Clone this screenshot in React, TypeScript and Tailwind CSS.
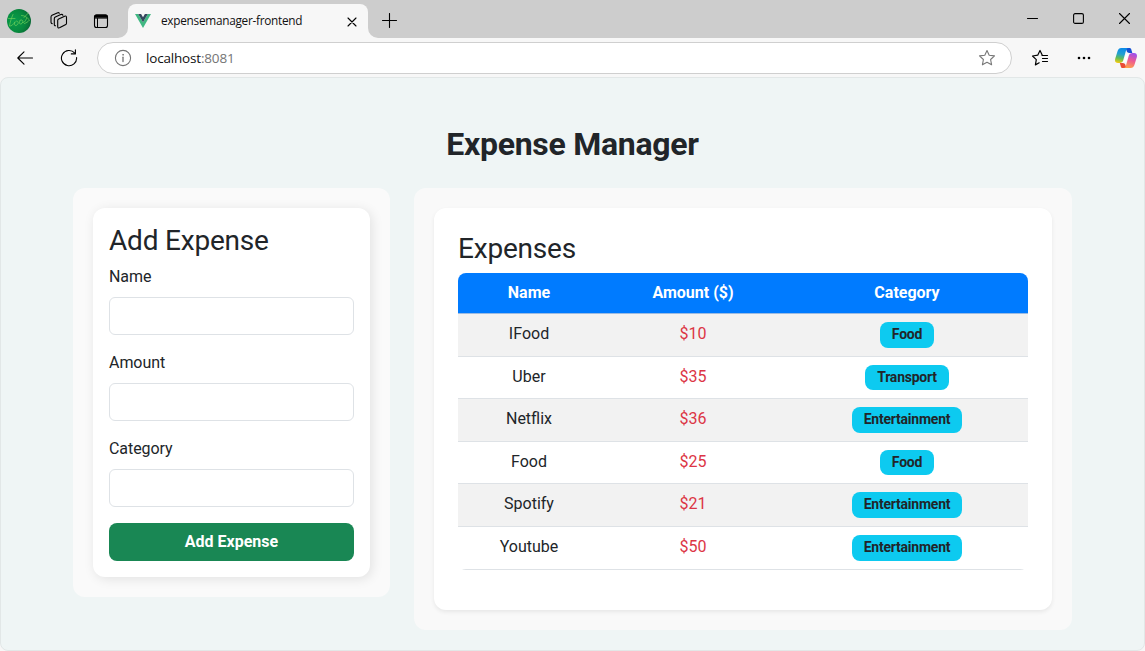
import type { ReactNode } from "react";

const expenses = [
  { name: "IFood", amount: 10, category: "Food" },
  { name: "Uber", amount: 35, category: "Transport" },
  { name: "Netflix", amount: 36, category: "Entertainment" },
  { name: "Food", amount: 25, category: "Food" },
  { name: "Spotify", amount: 21, category: "Entertainment" },
  { name: "Youtube", amount: 50, category: "Entertainment" },
];

function Line({ w, h, children, className = "" }: { w: number; h: number; children: ReactNode; className?: string }) {
  return (
    <svg
      width={w}
      height={h}
      viewBox={`0 0 ${w} ${h}`}
      fill="none"
      stroke="currentColor"
      strokeWidth="1.1"
      strokeLinecap="round"
      strokeLinejoin="round"
      className={`shrink-0 ${className}`}
    >
      {children}
    </svg>
  );
}

function Avatar() {
  return (
    <svg width="24" height="24" viewBox="0 0 24 24" className="mt-[3px] ml-[7px] shrink-0">
      <defs>
        <radialGradient id="av" cx="0.3" cy="0.5" r="0.75">
          <stop offset="0" stopColor="#0a9d4c" />
          <stop offset="0.6" stopColor="#078a3e" />
          <stop offset="1" stopColor="#0a6233" />
        </radialGradient>
      </defs>
      <circle cx="12" cy="12" r="12" fill="url(#av)" />
      <path
        d="M1.500 9.500H8M6 5.500C4.500 9 3 13 2.500 17 4.500 17.500 6.500 15 8 13M8 13C6.500 15.500 8 17.500 10 16S11.500 12 9.500 12M13 11.500C12 13.500 12.500 15.500 14 15S16.500 12.500 15.500 11.500 13.500 11 13 11.500M15.500 13.500C17.500 14 18.500 11.500 19.500 9.500M14.500 6.500C18 6.500 20 8.500 22.500 11 21 13 19 14 17.500 14.500M21.500 3.800 17 8.500"
        fill="none"
        stroke="#6fcf5a"
        strokeWidth="0.7"
        strokeLinecap="round"
      />
    </svg>
  );
}

function Copilot() {
  return (
    <svg width="22" height="20" viewBox="0 0 22 20" className="shrink-0">
      <defs>
        <linearGradient id="cpa" x1="0.5" y1="0" x2="0.3" y2="1">
          <stop offset="0" stopColor="#0c8be8" />
          <stop offset="0.4" stopColor="#22a0d0" />
          <stop offset="0.7" stopColor="#62bd54" />
          <stop offset="1" stopColor="#f4cb12" />
        </linearGradient>
        <linearGradient id="cpb" x1="0.7" y1="0" x2="0.4" y2="1">
          <stop offset="0" stopColor="#9a50ef" />
          <stop offset="0.5" stopColor="#ee5a91" />
          <stop offset="1" stopColor="#ffa04c" />
        </linearGradient>
      </defs>
      <path d="M10.500 0h3.900c1 0 1.600.5 1.900 1.500L17.300 5H14.500c-2 0-2.600-1-3-2.500z" fill="#1450d2" />
      <path d="M11.500 20H7.700c-1 0-1.600-.5-1.900-1.500L4.800 15h2.800c2 0 2.700 1 3 2.500z" fill="#ea4c34" />
      <path d="M6.200 0H13.500C12 0 11.500 1 11.100 2.300L8.300 12C7.600 14.200 6.500 15 4.800 15H3C.4 15-.4 13.200.2 10.800L2.600 3C3.300.9 4.400 0 6.200 0z" fill="url(#cpa)" />
      <path d="M15.800 20H8.500C10 20 10.500 19 10.900 17.700L13.700 8C14.400 5.800 15.500 5 17.200 5H19c2.600 0 3.400 1.800 2.800 4.200L19.400 17C18.700 19.100 17.600 20 15.800 20z" fill="url(#cpb)" />
      <path d="M11.500 6.200H14.100C13.500 6.600 13.200 7.300 12.900 8.200L11.600 12.600C11.300 13.500 10.900 13.900 10 13.900H7.900C8.500 13.500 8.900 12.800 9.200 11.900L10.300 8C10.600 6.900 10.900 6.300 11.500 6.200Z" fill="#fff" />
    </svg>
  );
}

function TitleBar() {
  return (
    <div className="flex h-[38px] items-center bg-[#cdcdcd]">
      <Avatar />
      <Line w={18} h={18} className="mt-[3px] ml-[19px]">
        <path d="M8.700 6.900 14.600 4.200Q16.500 3.500 16.500 5.300V11.200Q16.500 12 15.800 12.400L10 15.600Q7.700 16.700 7.700 14.600V8.500Q7.700 7.400 8.700 6.900Z" />
        <path d="M5.500 13.700Q4.300 13.800 4.300 12.200V6.800Q4.300 5.600 5.300 5.100L10.800 2.600Q12.400 2 12.900 3.200" />
        <path d="M2.200 11.600Q1 11.600 1 10V5Q1 3.700 2 3.200L7.200.9Q8.800.3 9.300 1.300" />
      </Line>
      <Line w={16} h={15} className="mt-[4px] ml-[25px]">
        <rect x="1.500" y="1" width="13" height="12.500" rx="2" strokeWidth="1.100" />
        <path d="M1.500 3.700V2.700Q1.500 1 3.200 1H12.800Q14.500 1 14.500 2.700V3.700Z" fill="currentColor" strokeWidth="1" />
        <path d="M4.500 4.500V13" strokeWidth="1" />
      </Line>
      <div className="flex h-[38px] w-[260px] items-end pl-[9px]">
        <svg width="10" height="10" viewBox="0 0 10 10" className="shrink-0">
          <path d="M10 0V10H0A10 10 0 0 0 10 0Z" fill="#f7f7f7" />
        </svg>
        <div className="flex h-[34px] w-[240px] shrink-0 items-center rounded-t-[8px] bg-[#f7f7f7] pr-[11px] pl-[7px]">
          <svg width="16" height="14" viewBox="0 0 16 14" className="shrink-0">
            <path d="M0 0H3.200L8 8.300 12.800 0H16L8 14Z" fill="#41b883" />
            <path d="M3.200 0H6.100L8 3.300 9.900 0H12.800L8 8.300Z" fill="#34495e" />
          </svg>
          <span className="ml-[10px] flex-1 text-[11.800px] tracking-[-0.270px] whitespace-nowrap text-[#111]">
            expensemanager-frontend
          </span>
          <Line w={10} h={10} className="mt-[1px]">
            <path d="M1 1 9 9M9 1 1 9" />
          </Line>
        </div>
        <svg width="10" height="10" viewBox="0 0 10 10" className="shrink-0">
          <path d="M0 0V10H10A10 10 0 0 1 0 0Z" fill="#f7f7f7" />
        </svg>
      </div>
      <Line w={15} h={15} className="mt-[3px] ml-[13px]">
        <path d="M7.500.5V14.500M.5 7.500H14.500" />
      </Line>
      <div className="mr-[15px] mb-[2px] ml-auto flex items-center gap-[35px]">
        <Line w={11} h={11}>
          <path d="M.5 5.500H10.500" />
        </Line>
        <Line w={11} h={11}>
          <rect x=".6" y=".6" width="9.800" height="9.800" rx="1.500" />
        </Line>
        <Line w={11} h={11}>
          <path d="M.5.5 10.500 10.500M10.500.5.5 10.500" />
        </Line>
      </div>
    </div>
  );
}

function Toolbar() {
  return (
    <div className="flex h-[39px] items-center bg-[#f7f7f7] pt-[1px]">
      <Line w={16} h={14} className="ml-[17px]">
        <path d="M15.500 7H.8M7 .8.8 7 7 13.200" />
      </Line>
      <Line w={18} h={18} className="ml-[27px]">
        <path d="M16.600 8.500A7.600 7.600 0 1 1 14.800 4.200" />
        <path d="M15.400.9V4.900H11.300" />
      </Line>
      <div className="ml-[19px] flex h-[32px] w-[915px] items-center rounded-full border border-[#cfcfcf] bg-white pr-[15px] pl-[16px]">
        <Line w={18} h={18} className="text-[#737373]">
          <circle cx="9" cy="9" r="7.600" />
          <path d="M9 8.200V12.500" strokeWidth="1.300" />
          <circle cx="9" cy="5.800" r=".5" fill="currentColor" strokeWidth=".6" />
        </Line>
        <span className="ml-[14px] flex-1 text-[13.500px] tracking-[-0.180px] text-[#111]">
          localhost<span className="text-[#757575]">:8081</span>
        </span>
        <Line w={18} h={18} className="text-[#777]">
          <path d="M9 1.500 11.200 6.200 16.500 6.900 12.600 10.500 13.600 15.800 9 13.300 4.400 15.800 5.400 10.500 1.500 6.900 6.800 6.200Z" />
        </Line>
      </div>
      <Line w={18} h={18} className="ml-[19px]">
        <path d="M11.300 6.200 9 1.500 6.700 6.200 1.500 7 5.300 10.600 4.400 15.900 8.200 13.800M11 6.500H16.500M11.500 9.500H16.500M11.500 12.500H16.500" strokeWidth="1.200" />
      </Line>
      <svg width="14" height="4" viewBox="0 0 14 4" className="ml-[28px] shrink-0">
        <circle cx="2" cy="2" r="1.300" />
        <circle cx="7" cy="2" r="1.300" />
        <circle cx="12" cy="2" r="1.300" />
      </svg>
      <div className="ml-[24px]">
        <Copilot />
      </div>
    </div>
  );
}

function Field({ label }: { label: string }) {
  return (
    <label className="mb-4 block text-base leading-6">
      <span className="mb-2 block tracking-[-0.060px]">{label}</span>
      <input className="block h-[38px] w-full rounded-[6px] border border-[#dee2e6] bg-white px-3 outline-none" />
    </label>
  );
}

export default function App() {
  return (
    <div className="flex h-[651px] w-[1145px] flex-col overflow-hidden bg-[#f7f7f7] font-['Open_Sans',sans-serif]">
      <TitleBar />
      <Toolbar />
      <main className="flex-1 rounded-[8px] border border-[#e2e7e7] bg-[#eff5f5] px-[72px] pt-[47.200px] font-[Roboto,sans-serif] text-[#212529]">
        <h1 className="mb-6 text-center text-[32px] leading-[38.400px] font-bold tracking-[-0.270px]">
          Expense Manager
        </h1>
        <div className="flex items-start gap-6">
          <section className="w-[317px] rounded-[12px] bg-[#fafafa] p-5">
            <div className="rounded-[12px] bg-white p-4 shadow-[2px_2px_12px_rgba(0,0,0,0.1)]">
              <h2 className="mb-2 text-[28px] leading-[33.600px] tracking-[-0.200px]">Add Expense</h2>
              <Field label="Name" />
              <Field label="Amount" />
              <Field label="Category" />
              <button className="block h-[38px] w-full rounded-[8px] bg-[#198754] text-base font-bold text-white">
                Add Expense
              </button>
            </div>
          </section>
          <section className="w-[658px] rounded-[12px] bg-[#f9f9f9] p-5">
            <div className="rounded-[12px] bg-white p-6 shadow-[0_2px_4px_rgba(0,0,0,0.075)]">
              <h2 className="mb-2 text-[28px] leading-[33.600px] tracking-[-0.200px]">Expenses</h2>
              <div className="mb-4 overflow-hidden rounded-[8px] text-center text-base leading-6">
                <div className="grid h-[41px] grid-cols-[142px_186px_242px] border-b border-[#9dbce2] bg-[#007bff] pt-2 font-bold text-white">
                  <div>Name</div>
                  <div>Amount ($)</div>
                  <div>Category</div>
                </div>
                {expenses.map((e) => (
                  <div
                    key={e.name}
                    className="grid h-[42.550px] grid-cols-[142px_186px_242px] items-start border-b border-[#dee2e6] pt-2 last:h-[43px] odd:bg-white even:bg-[#f2f2f2]"
                  >
                    <div>{e.name}</div>
                    <div className="text-[#dc3545]">${e.amount}</div>
                    <div className="flex justify-center">
                      <span className="h-[25.600px] rounded-[8px] bg-[#0dcaf0] px-[12px] text-[14px] leading-[25px] font-bold tracking-[-0.230px]">
                        {e.category}
                      </span>
                    </div>
                  </div>
                ))}
              </div>
            </div>
          </section>
        </div>
      </main>
    </div>
  );
}
